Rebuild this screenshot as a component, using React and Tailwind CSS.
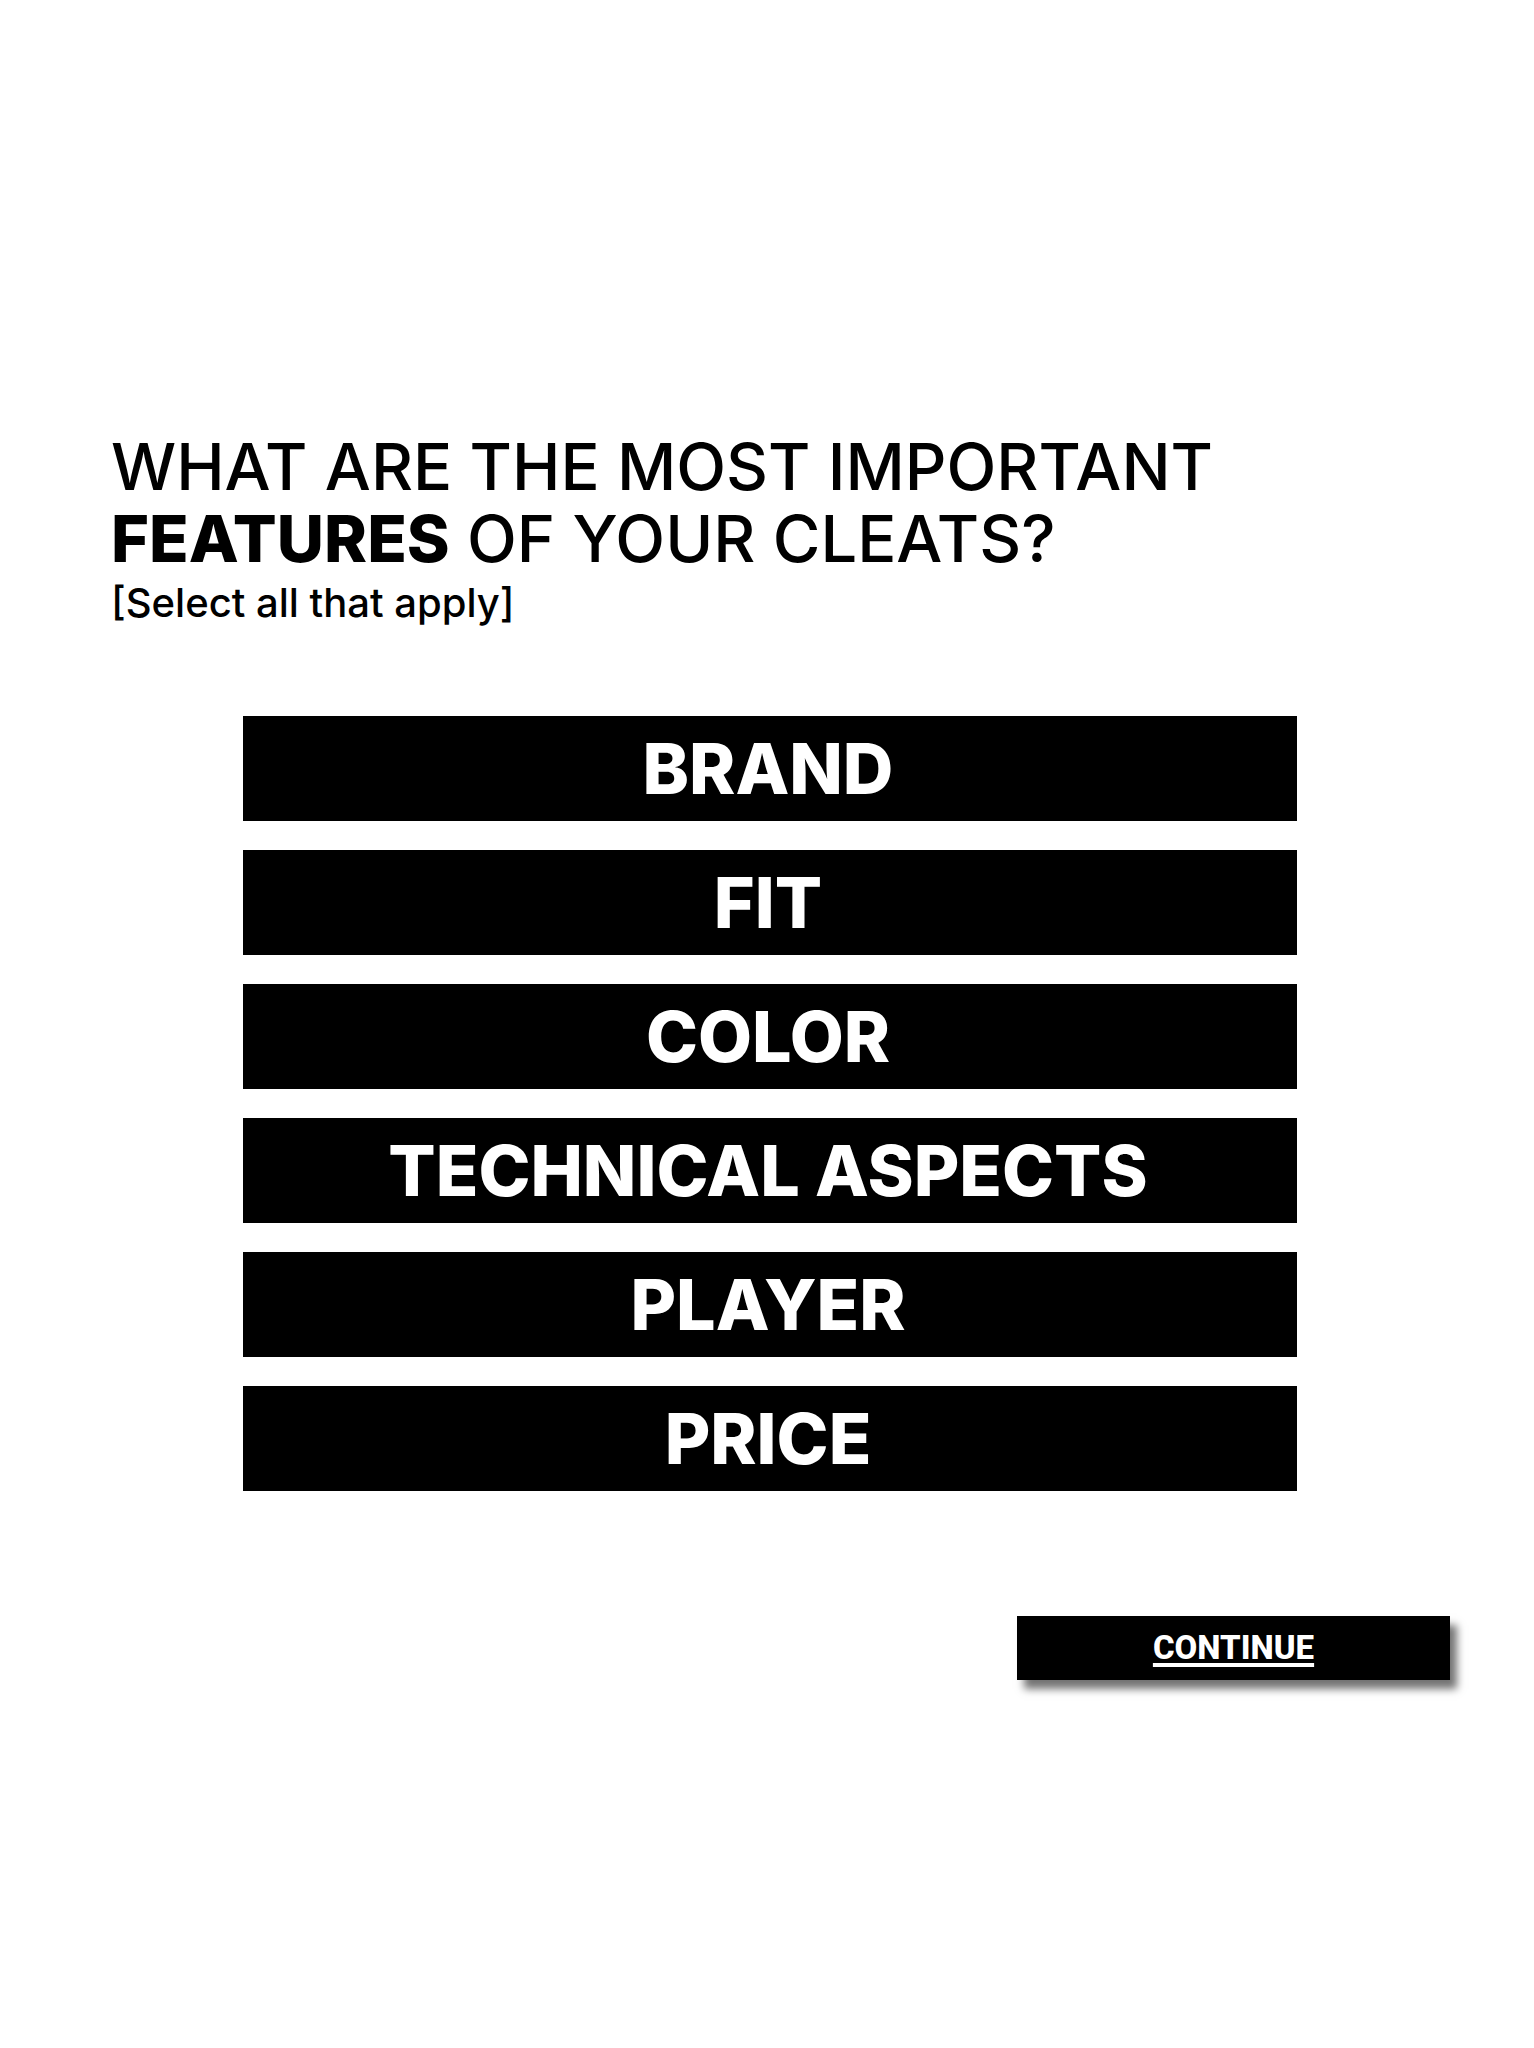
import { useState } from "react";

const FEATURES = ["Brand", "Fit", "Color", "Technical Aspects", "Player", "Price"];

function FeatureButton({ label, pressed, onToggle }) {
  return (
    <button
      type="button"
      aria-pressed={pressed}
      onClick={onToggle}
      className="flex h-[105px] w-full cursor-pointer items-center justify-center bg-black pr-1 text-[70px] leading-none font-extrabold text-white uppercase aria-pressed:bg-neutral-700"
    >
      {label}
    </button>
  );
}

export default function App() {
  const [selected, setSelected] = useState([]);

  const toggle = (name) =>
    setSelected((current) =>
      current.includes(name) ? current.filter((n) => n !== name) : [...current, name]
    );

  return (
    <main className="flex min-h-screen flex-col bg-white pt-[431px] pr-[84px] pb-24 pl-[111px] font-['Inter','Liberation_Sans',sans-serif] text-black">
      <h1 className="text-[65px] leading-[72px] font-medium uppercase">
        What are the most important
        <br />
        <strong className="font-extrabold">Features</strong> of your cleats?
      </h1>
      <p className="text-[40px] leading-[56px] font-medium">[Select all that apply]</p>

      <div
        role="group"
        aria-label="Cleat features"
        className="mt-[85px] mr-[153px] ml-[132px] flex flex-col gap-[29px]"
      >
        {FEATURES.map((name) => (
          <FeatureButton
            key={name}
            label={name}
            pressed={selected.includes(name)}
            onToggle={() => toggle(name)}
          />
        ))}
      </div>

      <button
        type="button"
        className="mt-[125px] flex h-16 w-[433px] cursor-pointer items-center justify-center self-end bg-black pb-0.5 font-['Roboto','Liberation_Sans',sans-serif] text-[33px] leading-none font-extrabold text-white uppercase underline decoration-[4px] underline-offset-4 shadow-[7px_9px_8px_rgba(0,0,0,0.55)]"
      >
        Continue
      </button>
    </main>
  );
}
